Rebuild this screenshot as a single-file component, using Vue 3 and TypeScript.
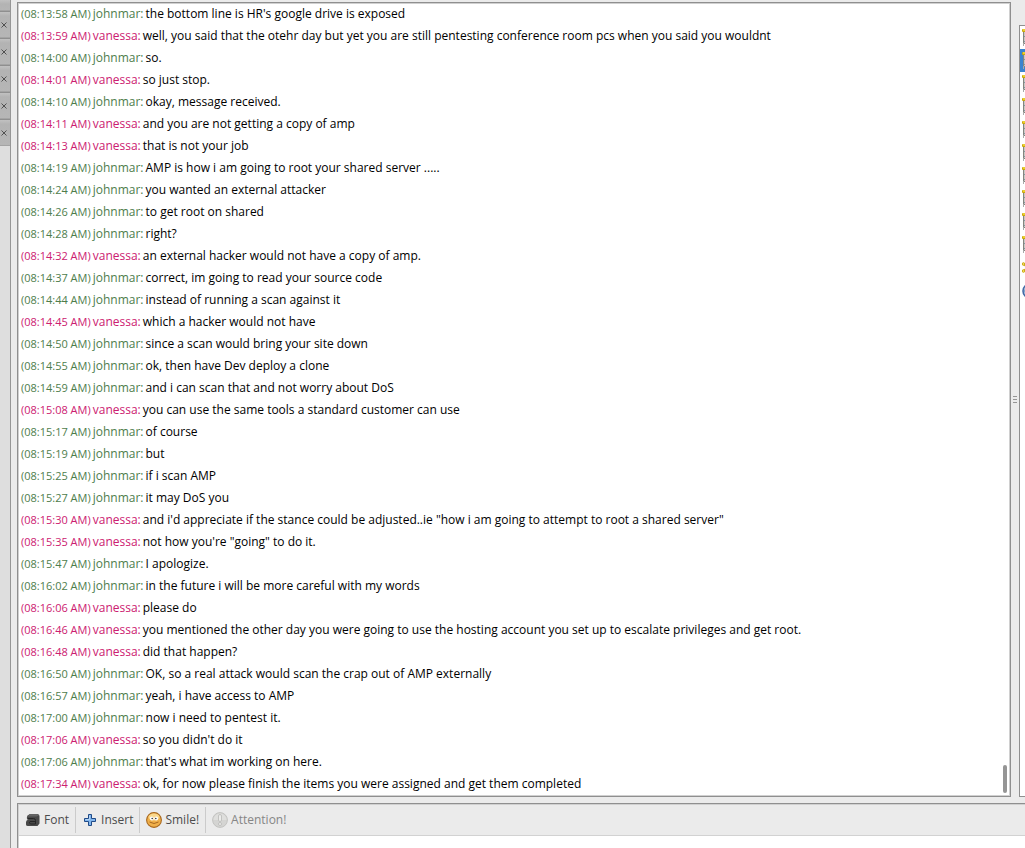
<script setup lang="ts">
interface Message {
  time: string
  name: 'johnmar' | 'vanessa'
  text: string
}

const j = (time: string, text: string): Message => ({ time, name: 'johnmar', text })
const v = (time: string, text: string): Message => ({ time, name: 'vanessa', text })

const messages: Message[] = [
  j('08:13:58', "the bottom line is HR's google drive is exposed"),
  v('08:13:59', 'well, you said that the otehr day but yet you are still pentesting conference room pcs when you said you wouldnt'),
  j('08:14:00', 'so.'),
  v('08:14:01', 'so just stop.'),
  j('08:14:10', 'okay, message received.'),
  v('08:14:11', 'and you are not getting a copy of amp'),
  v('08:14:13', 'that is not your job'),
  j('08:14:19', 'AMP is how i am going to root your shared server .....'),
  j('08:14:24', 'you wanted an external attacker'),
  j('08:14:26', 'to get root on shared'),
  j('08:14:28', 'right?'),
  v('08:14:32', 'an external hacker would not have a copy of amp.'),
  j('08:14:37', 'correct, im going to read your source code'),
  j('08:14:44', 'instead of running a scan against it'),
  v('08:14:45', 'which a hacker would not have'),
  j('08:14:50', 'since a scan would bring your site down'),
  j('08:14:55', 'ok, then have Dev deploy a clone'),
  j('08:14:59', 'and i can scan that and not worry about DoS'),
  v('08:15:08', 'you can use the same tools a standard customer can use'),
  j('08:15:17', 'of course'),
  j('08:15:19', 'but'),
  j('08:15:25', 'if i scan AMP'),
  j('08:15:27', 'it may DoS you'),
  v('08:15:30', 'and i\'d appreciate if the stance could be adjusted..ie "how i am going to attempt to root a shared server"'),
  v('08:15:35', 'not how you\'re "going" to do it.'),
  j('08:15:47', 'I apologize.'),
  j('08:16:02', 'in the future i will be more careful with my words'),
  v('08:16:06', 'please do'),
  v('08:16:46', 'you mentioned the other day you were going to use the hosting account you set up to escalate privileges and get root.'),
  v('08:16:48', 'did that happen?'),
  j('08:16:50', 'OK, so a real attack would scan the crap out of AMP externally'),
  j('08:16:57', 'yeah, i have access to AMP'),
  j('08:17:00', 'now i need to pentest it.'),
  v('08:17:06', 'so you didn\'t do it'),
  j('08:17:06', "that's what im working on here."),
  v('08:17:34', 'ok, for now please finish the items you were assigned and get them completed'),
]

const members: string[] = [...Array(10).fill('founder'), 'scroll', 'buddy']
</script>

<template>
  <div class="window">
    <nav class="rail" aria-label="Conversations">
      <div v-for="n in 6" :key="n" class="tab">
        <button type="button" class="close" aria-label="Close tab">
          <svg width="6" height="6" viewBox="0 0 6 6"><path d="M0.5 0.5 5.5 5.5M5.5 0.5 0.5 5.5" stroke="#505050" stroke-width="1" /></svg>
        </button>
      </div>
    </nav>

    <main class="conversation">
      <div class="upper">
        <section class="log" aria-label="Chat log">
          <p v-for="(m, i) in messages" :key="i" class="message">
            <span class="time" :class="m.name">({{ m.time }} AM)</span>
            <span :class="m.name">{{ m.name }}:</span>
            <span>{{ m.text }}</span>
          </p>
          <span class="thumb"></span>
        </section>
        <div class="grip"><i></i><i></i><i></i></div>
        <ul class="members" aria-label="Members">
          <li v-for="(kind, i) in members" :key="i" :class="{ selected: i === 1 }">
            <svg v-if="kind === 'founder'" width="16" height="20" viewBox="0 0 16 20">
              <rect x="1" y="3" width="14" height="13" fill="#85857f" />
              <rect x="2" y="4" width="12" height="11" fill="#c9c9c5" />
              <path d="M2 8.5h12M2 13.5h12" stroke="#8497a6" />
              <rect x="1" y="15" width="1" height="3" fill="#aaa" />
              <rect x="0" y="1" width="16" height="3" rx="1" fill="#c9a60b" />
              <rect x="1" y="1" width="14" height="2" fill="#ecd02c" />
            </svg>
            <svg v-else-if="kind === 'scroll'" width="16" height="16" viewBox="0 0 16 16">
              <path d="M1.5 4 5 7.5 1.5 11M14 4 5 7.5 14 12" fill="none" stroke="#c9a60b" stroke-width="1.5" />
              <circle cx="1.5" cy="4" r="1.3" fill="#f5e36c" stroke="#c9a60b" />
              <circle cx="1.5" cy="11" r="1.3" fill="#f5e36c" stroke="#c9a60b" />
            </svg>
            <svg v-else width="16" height="16" viewBox="0 0 16 16">
              <circle cx="8" cy="8" r="7" fill="#c7d9ee" stroke="#4369a5" stroke-width="1.6" />
              <circle cx="8" cy="8" r="5.5" fill="#3465a4" />
            </svg>
          </li>
        </ul>
      </div>

      <section class="composer">
        <div class="toolbar" role="toolbar" aria-label="Formatting">
          <button type="button">
            <svg width="16" height="16" viewBox="0 0 16 16">
              <path d="M5 2H12q2.500 0 2.500 2.500v7L12.500 14H3Q1 14 1 12.500V10Q1 8 3.500 7.500H2Q1.500 5 2.500 3.500Z" fill="#484848" />
              <path d="M5 2H12q1 0 2 1.500L11.500 4.500H2.500Z" fill="#646464" />
              <path d="M3 6.500h5.500q2 0 2 2V12H5.500Q3.500 11 5 9.500H10" fill="none" stroke="#262626" />
            </svg>
            Font
          </button>
          <button type="button">
            <svg width="16" height="16" viewBox="0 0 16 16">
              <path d="M6.500 2.500h3v4h4v3h-4v4h-3v-4h-4v-3h4Z" fill="#80b5ed" stroke="#204a87" stroke-linejoin="round" />
              <path d="M7.500 3.500v4h-4" fill="none" stroke="#b2d4f7" />
            </svg>
            Insert
          </button>
          <button type="button">
            <svg width="16" height="16" viewBox="0 0 16 16">
              <circle cx="8" cy="8" r="7.400" fill="#f0b04a" stroke="#a8681f" stroke-width="1.100" />
              <ellipse cx="8" cy="5" rx="5.500" ry="3.500" fill="#fad88c" />
              <ellipse cx="5.800" cy="6.500" rx="1.900" ry="1.900" fill="#fff" />
              <ellipse cx="10.200" cy="6.500" rx="1.900" ry="1.900" fill="#fff" />
              <circle cx="6.200" cy="6.500" r="0.800" fill="#333" />
              <circle cx="9.800" cy="6.500" r="0.800" fill="#333" />
              <path d="M3.500 10q4.500 3 9 0" fill="none" stroke="#a8681f" />
            </svg>
            Smile!
          </button>
          <button type="button" disabled>
            <svg width="16" height="16" viewBox="0 0 16 16">
              <circle cx="8" cy="8" r="7.400" fill="#d4d4d2" stroke="#c3c3c1" />
              <path d="M1.500 8a6.500 6.500 0 0 1 13 0Z" fill="#dfdfdd" />
              <rect x="6.500" y="2.500" width="3" height="7" rx="1.500" fill="#ececea" stroke="#b9b9b7" stroke-width="0.800" />
              <circle cx="8" cy="12" r="1.500" fill="#ececea" stroke="#b9b9b7" stroke-width="0.800" />
            </svg>
            Attention!
          </button>
        </div>
        <textarea class="entry" aria-label="Message"></textarea>
      </section>
    </main>
  </div>
</template>

<style>
body {
  margin: 0;
}
</style>

<style scoped>
.window {
  display: flex;
  height: 100vh;
  overflow: hidden;
  background: #ebebeb;
  color: #000;
  font: 12px/22px "Open Sans", "Noto Sans", sans-serif;
}
.rail {
  flex: none;
  box-sizing: border-box;
  width: 11px;
  border-right: 1px solid #969696;
  background: #dedede;
  display: flex;
  flex-direction: column;
}
.tab {
  box-sizing: border-box;
  height: 27px;
  border-top: 1px solid #8f8f8f;
  background: linear-gradient(#c1c1c1, #b3b3b3 4px, #b6b6b6);
  box-shadow: inset 0 -1px #a4a4a4;
}
.tab:first-child {
  height: 11px;
  border-top: 0;
}
.tab:first-child .close {
  display: none;
}
.close {
  display: flex;
  margin: 0;
  padding: 10px 1px;
  border: 0;
  background: none;
}
.conversation {
  flex: 1;
  min-width: 0;
  display: flex;
  flex-direction: column;
  padding: 2px 0 0 6px;
}
.upper {
  flex: none;
  display: grid;
  grid-template-columns: 1fr 8px 6px;
}
.log {
  position: relative;
  border: 1px solid #8f8f8f;
  box-shadow: inset 0 0 0 1px #d0d0d0;
  background: #fff;
  padding: 0 3px 1px;
}
.message {
  display: flex;
  align-items: baseline;
  gap: 2px;
  margin: 0;
}
.time {
  flex: none;
  font-size: 11px;
}
.johnmar {
  color: #4e7d4c;
}
.vanessa {
  color: #cc2070;
}
.thumb {
  position: absolute;
  right: 3px;
  bottom: 3px;
  width: 4px;
  height: 28px;
  border-radius: 2px;
  background: #959595;
}
.grip {
  display: flex;
  flex-direction: column;
  align-items: center;
  justify-content: center;
  gap: 2px;
}
.grip i {
  width: 4px;
  height: 1px;
  background: #959595;
}
.members {
  list-style: none;
  margin: 23px 0 0;
  padding: 0;
  border: 1px solid #8f8f8f;
  border-right: 0;
  background: #fff;
  overflow: hidden;
}
.members li {
  display: flex;
  align-items: center;
  height: 23px;
  padding-left: 2px;
}
.members svg {
  flex: none;
}
.members .selected {
  background: #3c84cf;
}
.composer {
  flex: 1;
  min-height: 0;
  display: flex;
  flex-direction: column;
  margin-top: 6px;
  border: 1px solid #8f8f8f;
  border-width: 1px 0 0 1px;
  box-shadow: inset 1px 1px #d0d0d0;
}
.toolbar {
  flex: none;
  box-sizing: border-box;
  height: 32px;
  display: flex;
  align-items: center;
  margin-left: 1px;
  border-bottom: 1px solid #d2d2d2;
}
.toolbar button {
  box-sizing: border-box;
  height: 26px;
  display: flex;
  align-items: center;
  gap: 3px;
  margin: 0;
  padding: 0 6px;
  border: 0;
  border-right: 1px solid #cbcbcb;
  background: none;
  color: #4c4c4c;
  font: inherit;
}
.toolbar button:last-child {
  border-right: 0;
}
.toolbar button:disabled {
  color: #868686;
}
.entry {
  flex: 1;
  min-height: 0;
  margin: 0 0 0 1px;
  padding: 2px;
  border: 0;
  outline: 0;
  resize: none;
  background: #fff;
  font: inherit;
}
</style>
